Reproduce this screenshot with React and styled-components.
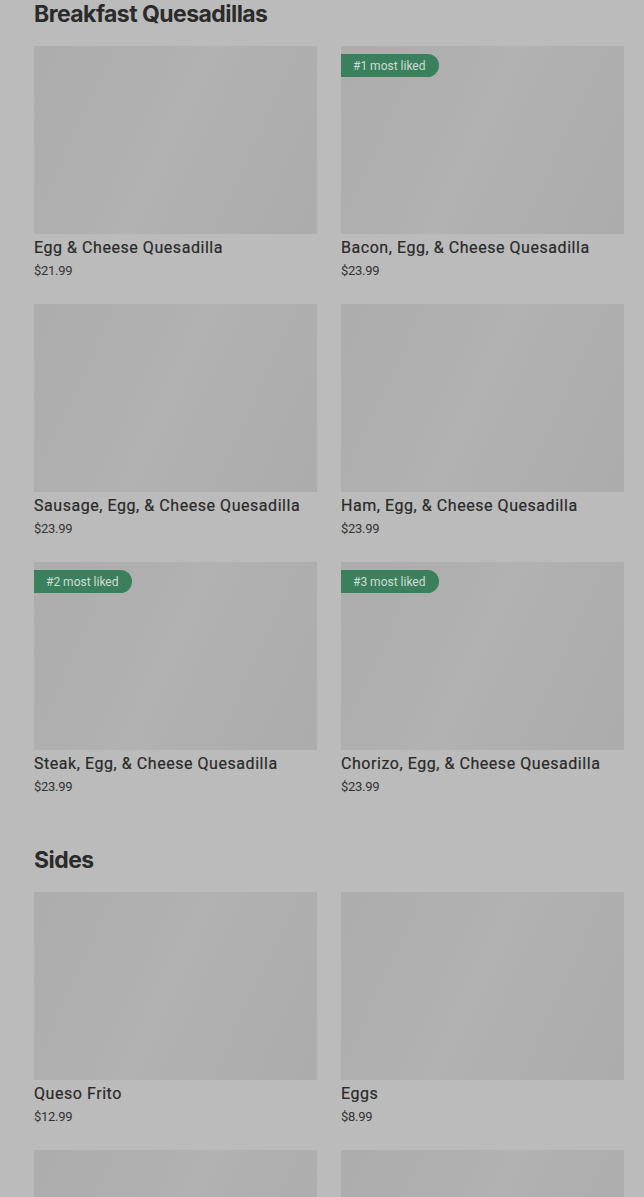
import React from "react";
import styled, { createGlobalStyle } from "styled-components";

const Global = createGlobalStyle`
  html, body { margin: 0; padding: 0; background: #bbbbbb; }
  body { font-family: "Inter", "Roboto", sans-serif; overflow: hidden; }
`;

const Page = styled.div`
  width: 644px;
  height: 1197px;
  overflow: hidden;
  background: #bbbbbb;
`;

const Content = styled.div`
  margin-top: -2px;
  padding: 0 20px 0 34px;
  display: flex;
  flex-direction: column;
  gap: 48px;
`;

const Section = styled.section`
  display: flex;
  flex-direction: column;
  gap: 16px;
`;

const Heading = styled.h2`
  margin: 0;
  font-family: "Inter", sans-serif;
  font-size: 23px;
  line-height: 32px;
  font-weight: 700;
  letter-spacing: -0.55px;
  color: #2b2b2b;
`;

const Grid = styled.div`
  display: grid;
  grid-template-columns: 283px 283px;
  column-gap: 24px;
  row-gap: 24px;
`;

const Card = styled.div`
  display: flex;
  flex-direction: column;
`;

const ImageBox = styled.div`
  position: relative;
  height: 188px;
  background: linear-gradient(
    115deg,
    #adadad 0%,
    #afafaf 30%,
    #b2b2b2 48%,
    #afafaf 66%,
    #acacac 100%
  );
`;

const Badge = styled.span`
  position: absolute;
  top: 8px;
  left: 0;
  height: 23px;
  padding: 0 13px 0 12px;
  display: flex;
  align-items: center;
  background: #3b805d;
  color: #cfdcd4;
  font-family: "Roboto", sans-serif;
  font-size: 12px;
  border-radius: 0 12px 12px 0;
`;

const Title = styled.div`
  margin-top: 4px;
  font-family: "Roboto", sans-serif;
  font-size: 16px;
  font-weight: 400;
  line-height: 20px;
  color: #2a2a2a;
  letter-spacing: 0.55px;
  -webkit-text-stroke: 0.2px #2a2a2a;
`;

const Price = styled.div`
  margin-top: 4px;
  font-family: "Roboto", sans-serif;
  font-size: 13px;
  line-height: 18px;
  color: #333333;
  letter-spacing: -0.3px;
`;

const sections = [
  {
    name: "Breakfast Quesadillas",
    items: [
      { title: "Egg & Cheese Quesadilla", price: "$21.99" },
      { title: "Bacon, Egg, & Cheese Quesadilla", price: "$23.99", badge: "#1 most liked" },
      { title: "Sausage, Egg, & Cheese Quesadilla", price: "$23.99" },
      { title: "Ham, Egg, & Cheese Quesadilla", price: "$23.99" },
      { title: "Steak, Egg, & Cheese Quesadilla", price: "$23.99", badge: "#2 most liked" },
      { title: "Chorizo, Egg, & Cheese Quesadilla", price: "$23.99", badge: "#3 most liked" },
    ],
  },
  {
    name: "Sides",
    items: [
      { title: "Queso Frito", price: "$12.99" },
      { title: "Eggs", price: "$8.99" },
      { title: "", price: "" },
      { title: "", price: "" },
    ],
  },
];

export default function App() {
  return (
    <Page>
      <Global />
      <Content>
        {sections.map((s) => (
          <Section key={s.name}>
            <Heading>{s.name}</Heading>
            <Grid>
              {s.items.map((it, i) => (
                <Card key={i}>
                  <ImageBox>{it.badge && <Badge>{it.badge}</Badge>}</ImageBox>
                  <Title>{it.title}</Title>
                  <Price>{it.price}</Price>
                </Card>
              ))}
            </Grid>
          </Section>
        ))}
      </Content>
    </Page>
  );
}
